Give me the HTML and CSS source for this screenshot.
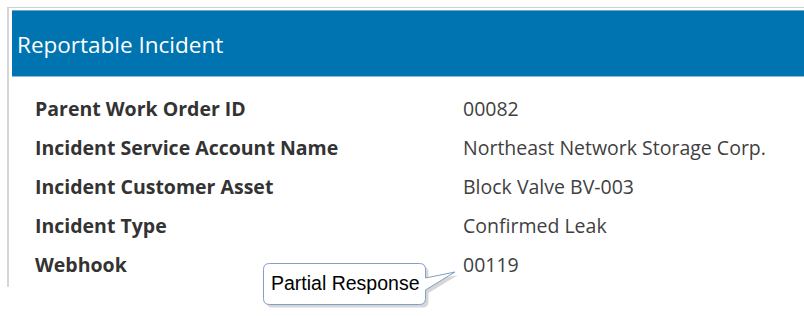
FILE: index.html
```html
<!DOCTYPE html>
<html lang="en">
<head>
    <meta charset="UTF-8">
    <title>Reportable Incident</title>
    <link rel="stylesheet" href="styles.css">
</head>
<body>
    <div class="panel">
        <div class="banner">
            <h1>Reportable Incident</h1>
        </div>
        <dl class="details">
            <div class="row"><dt>Parent Work Order ID</dt><dd>00082</dd></div>
            <div class="row"><dt>Incident Service Account Name</dt><dd>Northeast Network Storage Corp.</dd></div>
            <div class="row"><dt>Incident Customer Asset</dt><dd>Block Valve BV-003</dd></div>
            <div class="row"><dt>Incident Type</dt><dd>Confirmed Leak</dd></div>
            <div class="row"><dt>Webhook</dt><dd>00119</dd></div>
        </dl>

        <!-- annotation callout -->
        <div class="callout">
            <svg width="200" height="52" viewBox="0 0 200 52">
                <path class="callout-shadow" d="M9.5 3.5 H159.5 Q165.5 3.5 165.5 9.5 V18 L195 12 L165.5 30 V38.5 Q165.5 44.5 159.5 44.5 H9.5 Q3.5 44.5 3.5 38.5 V9.5 Q3.5 3.5 9.5 3.5 Z" transform="translate(3,3)"/>
                <path class="callout-body" d="M9.5 3.5 H159.5 Q165.5 3.5 165.5 9.5 V18 L195 12 L165.5 30 V38.5 Q165.5 44.5 159.5 44.5 H9.5 Q3.5 44.5 3.5 38.5 V9.5 Q3.5 3.5 9.5 3.5 Z"/>
            </svg>
            <span class="callout-text">Partial Response</span>
        </div>
    </div>
</body>
</html>
```

FILE: styles.css
```css
* {
    margin: 0;
    padding: 0;
    box-sizing: border-box;
}

body {
    font-family: 'Open Sans', 'Noto Sans', sans-serif;
    background: #fff;
    width: 804px;
    height: 316px;
    overflow: hidden;
}

/* Panel */
.panel {
    position: relative;
    margin: 7px 0 0 7px;
    height: 280px;
    border-top: 1px solid #cfcfcf;
    border-left: 2px solid #d6d6d6;
    padding: 2px 0 0 3px;
}

.banner {
    height: 67px;
    background: #0074b0;
    border-top: 1px solid #6aa8d0;
    border-bottom: 1px solid #8cbde0;
    display: flex;
    align-items: center;
    padding-left: 5px;
}

.banner h1 {
    font-size: 22.5px;
    font-weight: 400;
    color: #fff;
    margin-top: 2px;
}

/* Details */
.details {
    padding: 19px 0 0 23px;
}

.row {
    display: flex;
    height: 39px;
    align-items: flex-start;
    font-size: 19.5px;
    line-height: 26px;
}

.row dt {
    width: 428px;
    font-weight: 700;
    color: #333;
}

.row dd {
    color: #3f3f3f;
}

/* Callout */
.callout {
    position: absolute;
    left: 251px;
    top: 252px;
    width: 200px;
    height: 52px;
}

.callout svg {
    display: block;
}

.callout-shadow {
    fill: #c4c4c4;
    opacity: 0.7;
}

.callout-body {
    fill: #fff;
    stroke: #7f9fc4;
    stroke-width: 1;
}

.callout-text {
    position: absolute;
    left: 11px;
    top: 12px;
    font-family: 'Liberation Sans', Arial, sans-serif;
    font-size: 19.5px;
    line-height: 22px;
    color: #000;
}
```
